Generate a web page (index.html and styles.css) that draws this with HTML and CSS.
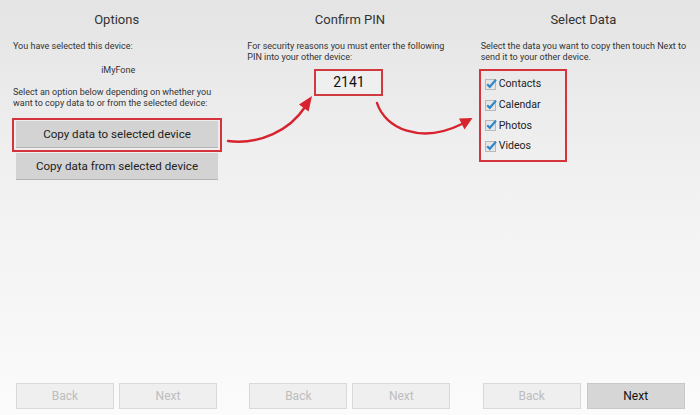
FILE: index.html
```html
<!DOCTYPE html>
<html>
<head>
<meta charset="utf-8">
<link rel="stylesheet" href="styles.css">
</head>
<body>
<div class="page">
  <div class="cols">
    <section class="col">
      <h2 class="title">Options</h2>
      <p class="txt t1">You have selected this device:</p>
      <p class="txt device">iMyFone</p>
      <p class="txt t2">Select an option below depending on whether you want to copy data to or from the selected device:</p>
      <div class="redbox btnbox"><div class="btn">Copy data to selected device</div></div>
      <div class="btn btn2">Copy data from selected device</div>
    </section>
    <section class="col">
      <h2 class="title">Confirm PIN</h2>
      <p class="txt t1">For security reasons you must enter the following PIN into your other device:</p>
      <div class="pin">2141</div>
    </section>
    <section class="col">
      <h2 class="title">Select Data</h2>
      <p class="txt t1">Select the data you want to copy then touch Next to send it to your other device.</p>
      <div class="redbox checks">
        <div class="row"><svg class="cb" viewBox="0 0 12 12"><rect x="0.5" y="1.5" width="10" height="10" fill="#e6e6e6" stroke="#b8b8b8"/><path d="M2.2 6.2 L4.8 8.8 L11 1.6" fill="none" stroke="#2f86c9" stroke-width="2.2"/></svg><span>Contacts</span></div>
        <div class="row"><svg class="cb" viewBox="0 0 12 12"><rect x="0.5" y="1.5" width="10" height="10" fill="#e6e6e6" stroke="#b8b8b8"/><path d="M2.2 6.2 L4.8 8.8 L11 1.6" fill="none" stroke="#2f86c9" stroke-width="2.2"/></svg><span>Calendar</span></div>
        <div class="row"><svg class="cb" viewBox="0 0 12 12"><rect x="0.5" y="1.5" width="10" height="10" fill="#e6e6e6" stroke="#b8b8b8"/><path d="M2.2 6.2 L4.8 8.8 L11 1.6" fill="none" stroke="#2f86c9" stroke-width="2.2"/></svg><span>Photos</span></div>
        <div class="row"><svg class="cb" viewBox="0 0 12 12"><rect x="0.5" y="1.5" width="10" height="10" fill="#e6e6e6" stroke="#b8b8b8"/><path d="M2.2 6.2 L4.8 8.8 L11 1.6" fill="none" stroke="#2f86c9" stroke-width="2.2"/></svg><span>Videos</span></div>
      </div>
    </section>
  </div>
  <div class="footer">
    <div class="navs"><div class="nav">Back</div><div class="nav">Next</div></div>
    <div class="navs"><div class="nav">Back</div><div class="nav">Next</div></div>
    <div class="navs"><div class="nav">Back</div><div class="nav active">Next</div></div>
  </div>
  <svg class="arrows" viewBox="0 0 700 415" width="700" height="415">
    <path d="M228 141 C 260 145, 290 130, 305 107" fill="none" stroke="#d8232e" stroke-width="2.4" stroke-linecap="round"/>
    <polygon points="312,96 308.6,111.5 299,104.5" fill="#d8232e"/>
    <path d="M377 103 C 385 128, 420 145, 463 123.5" fill="none" stroke="#d8232e" stroke-width="2.4" stroke-linecap="round"/>
    <polygon points="472.5,118 464.5,129.5 459,118.5" fill="#d8232e"/>
  </svg>
</div>
</body>
</html>
```
FILE: styles.css
```css
html, body {
  margin: 0;
  padding: 0;
}
body {
  font-family: Roboto, "Liberation Sans", Arial, sans-serif;
  color: #333;
}
.page {
  position: relative;
  width: 700px;
  height: 415px;
  overflow: hidden;
  display: flex;
  flex-direction: column;
  background: linear-gradient(180deg, #e4e4e4 0%, #f0f0f0 40%, #fbfbfb 100%);
}
.cols {
  flex: 1;
  display: grid;
  grid-template-columns: repeat(3, 1fr);
}
.col {
  padding: 10px 10px 0 13px;
  display: flex;
  flex-direction: column;
  align-items: flex-start;
}
.col + .col {
  padding-left: 14px;
}
.title {
  margin: 0 -10px 0 -13px;
  align-self: stretch;
  text-align: center;
  font-size: 13px;
  line-height: 20px;
  font-weight: 400;
  color: #333;
}
.col + .col .title {
  margin-left: -14px;
}
.txt {
  margin: 0;
  font-size: 9px;
  line-height: 11px;
  color: #333;
}
.t1 {
  margin-top: 10.5px;
}
.device {
  align-self: stretch;
  text-align: center;
  margin-top: 13px;
}
.t2 {
  margin-top: 11px;
}
.redbox {
  border: 2px solid #d6343c;
}
.btnbox {
  margin-top: 9.5px;
  margin-left: -1px;
  padding: 1px 2px 2px 2px;
}
.btn {
  width: 202px;
  height: 27px;
  box-sizing: border-box;
  background: #d3d3d3;
  border-bottom: 1px solid #b4b4b4;
  font-size: 11.6px;
  line-height: 26px;
  text-align: center;
  color: #222;
}
.btn2 {
  margin-top: 1px;
  margin-left: 3px;
}
.pin {
  align-self: center;
  margin-top: 6.5px;
  margin-left: -6px;
  width: 69px;
  height: 27px;
  box-sizing: border-box;
  border: 2px solid #cf3a41;
  background: #efefef;
  font-size: 14px;
  line-height: 23px;
  text-align: center;
  color: #111;
}
.checks {
  margin-top: 6.5px;
  margin-left: -2px;
  width: 88px;
  box-sizing: border-box;
  padding: 2.5px 0 4px 4px;
}
.row {
  display: flex;
  align-items: center;
  height: 20.7px;
  font-size: 10.6px;
  color: #222;
}
.cb {
  width: 12px;
  height: 12px;
  margin-right: 2px;
  flex: none;
}
.footer {
  display: grid;
  grid-template-columns: repeat(3, 1fr);
  padding-bottom: 6px;
}
.navs {
  display: flex;
  gap: 5px;
  padding-left: 16px;
}
.nav {
  width: 98px;
  height: 26px;
  box-sizing: border-box;
  background: #efefef;
  border: 1px solid #d9d9d9;
  font-size: 12px;
  line-height: 24px;
  text-align: center;
  color: #bdbdbd;
}
.navs:last-child {
  gap: 6px;
}
.nav.active {
  background: #d6d6d6;
  border-color: #c8c8c8;
  color: #111;
}
.arrows {
  position: absolute;
  left: 0;
  top: 0;
  pointer-events: none;
}
```
